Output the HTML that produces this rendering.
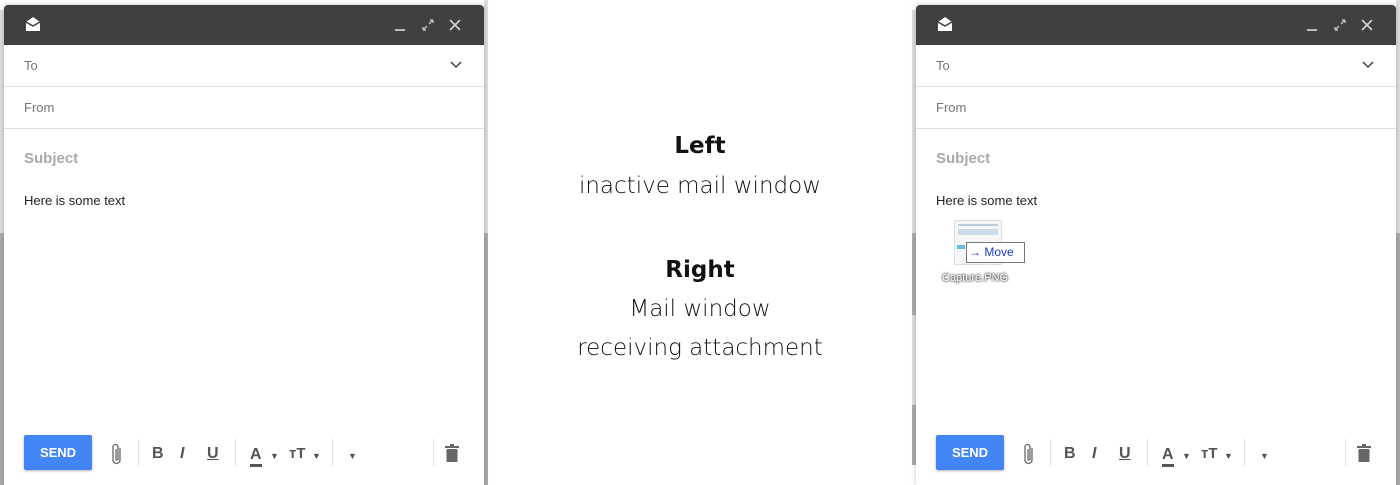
<!DOCTYPE html>
<html><head><style>
body{margin:0;width:1400px;height:485px;background:#fff;position:relative;overflow:hidden;font-family:"Liberation Sans",Arial,sans-serif}
.strip{position:absolute;width:4px}
.win{position:absolute;top:5px;width:480px;height:480px;background:#fff;box-shadow:0 0 4px rgba(0,0,0,.25)}
.hd{height:40px;background:#404040;border-radius:4px 4px 0 0;position:relative}
.row{height:41px;border-bottom:1px solid #e0e0e0;font-size:13px;color:#777;line-height:41px;padding-left:20px;position:relative}
.subj{position:absolute;left:20px;top:145px;font-size:15px;font-weight:bold;color:#aaa}
.body{position:absolute;left:20px;top:188px;font-size:13px;color:#222}
.send{position:absolute;left:20px;top:430px;width:68px;height:35px;background:#4285f4;color:#fff;font-weight:bold;font-size:13px;line-height:35px;text-align:center;border-radius:2px;box-shadow:0 1px 2px rgba(0,0,0,.3)}
.tb{position:absolute;top:440px;color:#555;font-size:16px}
.sep{position:absolute;top:434px;width:1px;height:27px;background:#e0e0e0}
.mid{position:absolute;left:488px;width:424px;text-align:center;color:#111;font-family:"DejaVu Sans","Liberation Sans",sans-serif;font-weight:300}
</style></head><body>
<div class="strip" style="left:0;top:10px;height:225px;background:#ddd"></div>
<div class="strip" style="left:0;top:233px;height:252px;background:#aaa"></div>
<div class="strip" style="left:484px;top:0;height:233px;background:#ddd"></div>
<div class="strip" style="left:484px;top:233px;height:252px;background:#aaa"></div>
<div class="strip" style="left:912px;top:10px;height:223px;background:#ddd"></div>
<div class="strip" style="left:912px;top:233px;height:82px;background:#aaa"></div>
<div class="strip" style="left:912px;top:315px;height:90px;background:#ddd"></div>
<div class="strip" style="left:912px;top:405px;height:60px;background:#aaa"></div>
<div class="strip" style="left:1396px;top:0;height:233px;background:#ddd"></div>
<div class="strip" style="left:1396px;top:233px;height:252px;background:#aaa"></div>

<div class="mid" style="top:133px;font-size:23px;font-weight:bold">Left</div>
<div class="mid" style="top:173px;font-size:23px">inactive mail window</div>
<div class="mid" style="top:257px;font-size:23px;font-weight:bold">Right</div>
<div class="mid" style="top:296px;font-size:23px">Mail window</div>
<div class="mid" style="top:335px;font-size:23px">receiving attachment</div>

<div class="win" style="left:4px">
 <div class="hd">
  <svg style="position:absolute;left:21px;top:12px" width="16" height="15" viewBox="0 0 16 15"><path d="M8 0L15 5V14H1V5Z" fill="#fff"/><path d="M1 5L8 9L15 5" stroke="#404040" stroke-width="1.5" fill="none"/></svg>
  <svg style="position:absolute;left:389px;top:12px" width="76" height="16" viewBox="0 0 76 16"><rect x="2" y="12" width="10" height="2" fill="#bbb"/><path d="M30 13l4-4M36 7l4-4M30 13v-3M30 13h3M40 3v3M40 3h-3" stroke="#bbb" stroke-width="1.5" fill="none"/><path d="M57 3l10 10M67 3L57 13" stroke="#ccc" stroke-width="1.8"/></svg>
 </div>
 <div class="row">To<svg style="position:absolute;right:22px;top:16px" width="12" height="8"><path d="M1 1l5 5 5-5" stroke="#555" stroke-width="1.6" fill="none"/></svg></div>
 <div class="row">From</div>
 <div class="subj">Subject</div>
 <div class="body">Here is some text</div>
 <div class="send">SEND</div>
 <svg class="tb" style="left:107px;top:437px" width="12" height="24" viewBox="0 0 12 24"><path d="M9 6v12a3.5 3.5 0 0 1-7 0V5a2.5 2.5 0 0 1 5 0v12a1 1 0 0 1-2 0V7" stroke="#666" stroke-width="1.3" fill="none"/></svg>
 <div class="sep" style="left:134px"></div>
 <div class="tb" style="left:148px;font-weight:bold">B</div>
 <div class="tb" style="left:176px;font-style:italic;font-weight:bold">I</div>
 <div class="tb" style="left:203px;text-decoration:underline;font-weight:bold">U</div>
 <div class="sep" style="left:231px"></div>
 <div class="tb" style="left:246px;font-weight:bold;border-bottom:3px solid #555;line-height:18px;top:441px">A</div>
 <div class="tb" style="left:266px;font-size:9px;top:446px">▼</div>
 <div class="tb" style="left:285px;font-weight:bold;font-size:15px">тT</div>
 <div class="tb" style="left:308px;font-size:9px;top:446px">▼</div>
 <div class="sep" style="left:328px"></div>
 <div class="tb" style="left:344px;font-size:9px;top:446px">▼</div>
 <div class="sep" style="left:429px"></div>
 <svg class="tb" style="left:441px;top:439px" width="14" height="18" viewBox="0 0 14 18"><rect x="0" y="2" width="14" height="2" fill="#666"/><rect x="5" y="0" width="4" height="2" fill="#666"/><rect x="1.5" y="5" width="11" height="13" rx="1" fill="#666"/></svg>
</div>

<div class="win" style="left:916px">
 <div class="hd">
  <svg style="position:absolute;left:21px;top:12px" width="16" height="15" viewBox="0 0 16 15"><path d="M8 0L15 5V14H1V5Z" fill="#fff"/><path d="M1 5L8 9L15 5" stroke="#404040" stroke-width="1.5" fill="none"/></svg>
  <svg style="position:absolute;left:389px;top:12px" width="76" height="16" viewBox="0 0 76 16"><rect x="2" y="12" width="10" height="2" fill="#bbb"/><path d="M30 13l4-4M36 7l4-4M30 13v-3M30 13h3M40 3v3M40 3h-3" stroke="#bbb" stroke-width="1.5" fill="none"/><path d="M57 3l10 10M67 3L57 13" stroke="#ccc" stroke-width="1.8"/></svg>
 </div>
 <div class="row">To<svg style="position:absolute;right:22px;top:16px" width="12" height="8"><path d="M1 1l5 5 5-5" stroke="#555" stroke-width="1.6" fill="none"/></svg></div>
 <div class="row">From</div>
 <div class="subj">Subject</div>
 <div class="body">Here is some text</div>
 <div style="position:absolute;left:38px;top:215px;width:46px;height:43px;background:#f4f6f8;border:1px solid #ddd">
  <div style="margin:3px;height:2px;background:#bcd"></div><div style="margin:3px;height:6px;background:#cde"></div><div style="position:absolute;left:2px;top:24px;width:8px;height:4px;background:#6bd"></div>
 </div>
 <div style="position:absolute;left:50px;top:237px;width:55px;height:19px;background:#fff;border:1px solid #777;color:#1a3cc8;font-size:12px;line-height:19px;padding-left:2px">→ Move</div>
 <div style="position:absolute;left:26px;top:267px;font-size:11px;color:#fff;text-shadow:0 0 2px #333,0 0 2px #333">Capture.PNG</div>
 <div class="send">SEND</div>
 <svg class="tb" style="left:107px;top:437px" width="12" height="24" viewBox="0 0 12 24"><path d="M9 6v12a3.5 3.5 0 0 1-7 0V5a2.5 2.5 0 0 1 5 0v12a1 1 0 0 1-2 0V7" stroke="#666" stroke-width="1.3" fill="none"/></svg>
 <div class="sep" style="left:134px"></div>
 <div class="tb" style="left:148px;font-weight:bold">B</div>
 <div class="tb" style="left:176px;font-style:italic;font-weight:bold">I</div>
 <div class="tb" style="left:203px;text-decoration:underline;font-weight:bold">U</div>
 <div class="sep" style="left:231px"></div>
 <div class="tb" style="left:246px;font-weight:bold;border-bottom:3px solid #555;line-height:18px;top:441px">A</div>
 <div class="tb" style="left:266px;font-size:9px;top:446px">▼</div>
 <div class="tb" style="left:285px;font-weight:bold;font-size:15px">тT</div>
 <div class="tb" style="left:308px;font-size:9px;top:446px">▼</div>
 <div class="sep" style="left:328px"></div>
 <div class="tb" style="left:344px;font-size:9px;top:446px">▼</div>
 <div class="sep" style="left:429px"></div>
 <svg class="tb" style="left:441px;top:439px" width="14" height="18" viewBox="0 0 14 18"><rect x="0" y="2" width="14" height="2" fill="#666"/><rect x="5" y="0" width="4" height="2" fill="#666"/><rect x="1.5" y="5" width="11" height="13" rx="1" fill="#666"/></svg>
</div>
</body></html>
